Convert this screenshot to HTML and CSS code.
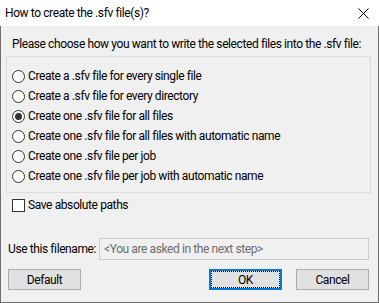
FILE: index.html
```html
<!DOCTYPE html>
<html lang="en">
<head>
    <meta charset="UTF-8">
    <title>How to create the .sfv file(s)?</title>
    <link rel="stylesheet" href="styles.css">
</head>
<body>
    <div class="window">
        <div class="titlebar">
            <span class="title">How to create the .sfv file(s)?</span>
            <svg class="close" width="11" height="11" viewBox="0 0 11 11">
                <path d="M0.5 0.5 L10.5 10.5 M10.5 0.5 L0.5 10.5" stroke="#000" stroke-width="1" fill="none"/>
            </svg>
        </div>

        <div class="content">
            <div class="prompt">Please choose how you want to write the selected files into the .sfv file:</div>

            <div class="group">
                <label class="option"><span class="radio"></span>Create a .sfv file for every single file</label>
                <label class="option"><span class="radio"></span>Create a .sfv file for every directory</label>
                <label class="option"><span class="radio checked"></span>Create one .sfv file for all files</label>
                <label class="option"><span class="radio"></span>Create one .sfv file for all files with automatic name</label>
                <label class="option"><span class="radio"></span>Create one .sfv file per job</label>
                <label class="option"><span class="radio"></span>Create one .sfv file per job with automatic name</label>
            </div>

            <label class="option check-row"><span class="checkbox"></span>Save absolute paths</label>

            <div class="filename-row">
                <span class="filename-label">Use this filename:</span>
                <div class="filename-input">&lt;You are asked in the next step&gt;</div>
            </div>

            <div class="buttons">
                <button class="btn">Default</button>
                <span class="spacer"></span>
                <button class="btn focused"><span class="focus-ring">OK</span></button>
                <button class="btn">Cancel</button>
            </div>
        </div>
    </div>
</body>
</html>
```

FILE: styles.css
```css
* {
    margin: 0;
    padding: 0;
    box-sizing: border-box;
}

body {
    font-family: Roboto, "Liberation Sans", sans-serif;
    font-size: 12px;
    letter-spacing: -0.4px;
    color: #000;
    background: #fff;
    white-space: nowrap;
}

.window {
    width: 379px;
    height: 303px;
    display: flex;
    flex-direction: column;
}

.titlebar {
    height: 26px;
    background: #fff;
    display: flex;
    align-items: center;
    justify-content: space-between;
    padding: 0 10px 0 5px;
}

.close {
    display: block;
}

.content {
    flex: 1;
    background: #f0f0f0;
    border: 1px solid #6f6f6f;
    border-top: none;
    padding: 0 9px 0 5px;
}

.prompt {
    height: 14px;
    line-height: 14px;
    margin: 11px 0 0 6px;
}

.group {
    margin-top: 5px;
    width: 365px;
    height: 137px;
    border: 1px solid #dcdcdc;
    padding: 9px 0 0 5px;
}

.option {
    display: flex;
    align-items: center;
    height: 20px;
}

.radio {
    width: 13px;
    height: 13px;
    border: 1px solid #333;
    border-radius: 50%;
    background: #fff;
    margin-right: 3px;
    display: flex;
    align-items: center;
    justify-content: center;
    flex-shrink: 0;
}

.radio.checked::after {
    content: "";
    width: 7px;
    height: 7px;
    border-radius: 50%;
    background: #333;
}

.check-row {
    margin: 2px 0 0 6px;
}

.checkbox {
    width: 13px;
    height: 13px;
    border: 1px solid #333;
    background: #fff;
    margin-right: 3px;
    flex-shrink: 0;
}

.filename-row {
    display: flex;
    align-items: center;
    margin: 23px 0 0 2px;
}

.filename-label {
    width: 91px;
}

.filename-input {
    width: 270px;
    height: 22px;
    border: 1px solid #cccccc;
    background: #f0f0f0;
    color: #6d6d6d;
    padding: 0 0 0 4px;
    line-height: 20px;
}

.buttons {
    display: flex;
    margin: 9px 0 0 2px;
}

.spacer {
    flex: 1;
}

.btn {
    width: 73px;
    height: 21px;
    border: 1px solid #adadad;
    background: #e1e1e1;
    font-family: inherit;
    font-size: 12px;
    letter-spacing: inherit;
    color: #000;
}

.btn + .btn {
    margin-left: 14px;
}

.btn.focused {
    border: 2px solid #0078d7;
}

.focus-ring {
    display: flex;
    align-items: center;
    justify-content: center;
    height: 100%;
    border: 1px dotted #000;
}
```
